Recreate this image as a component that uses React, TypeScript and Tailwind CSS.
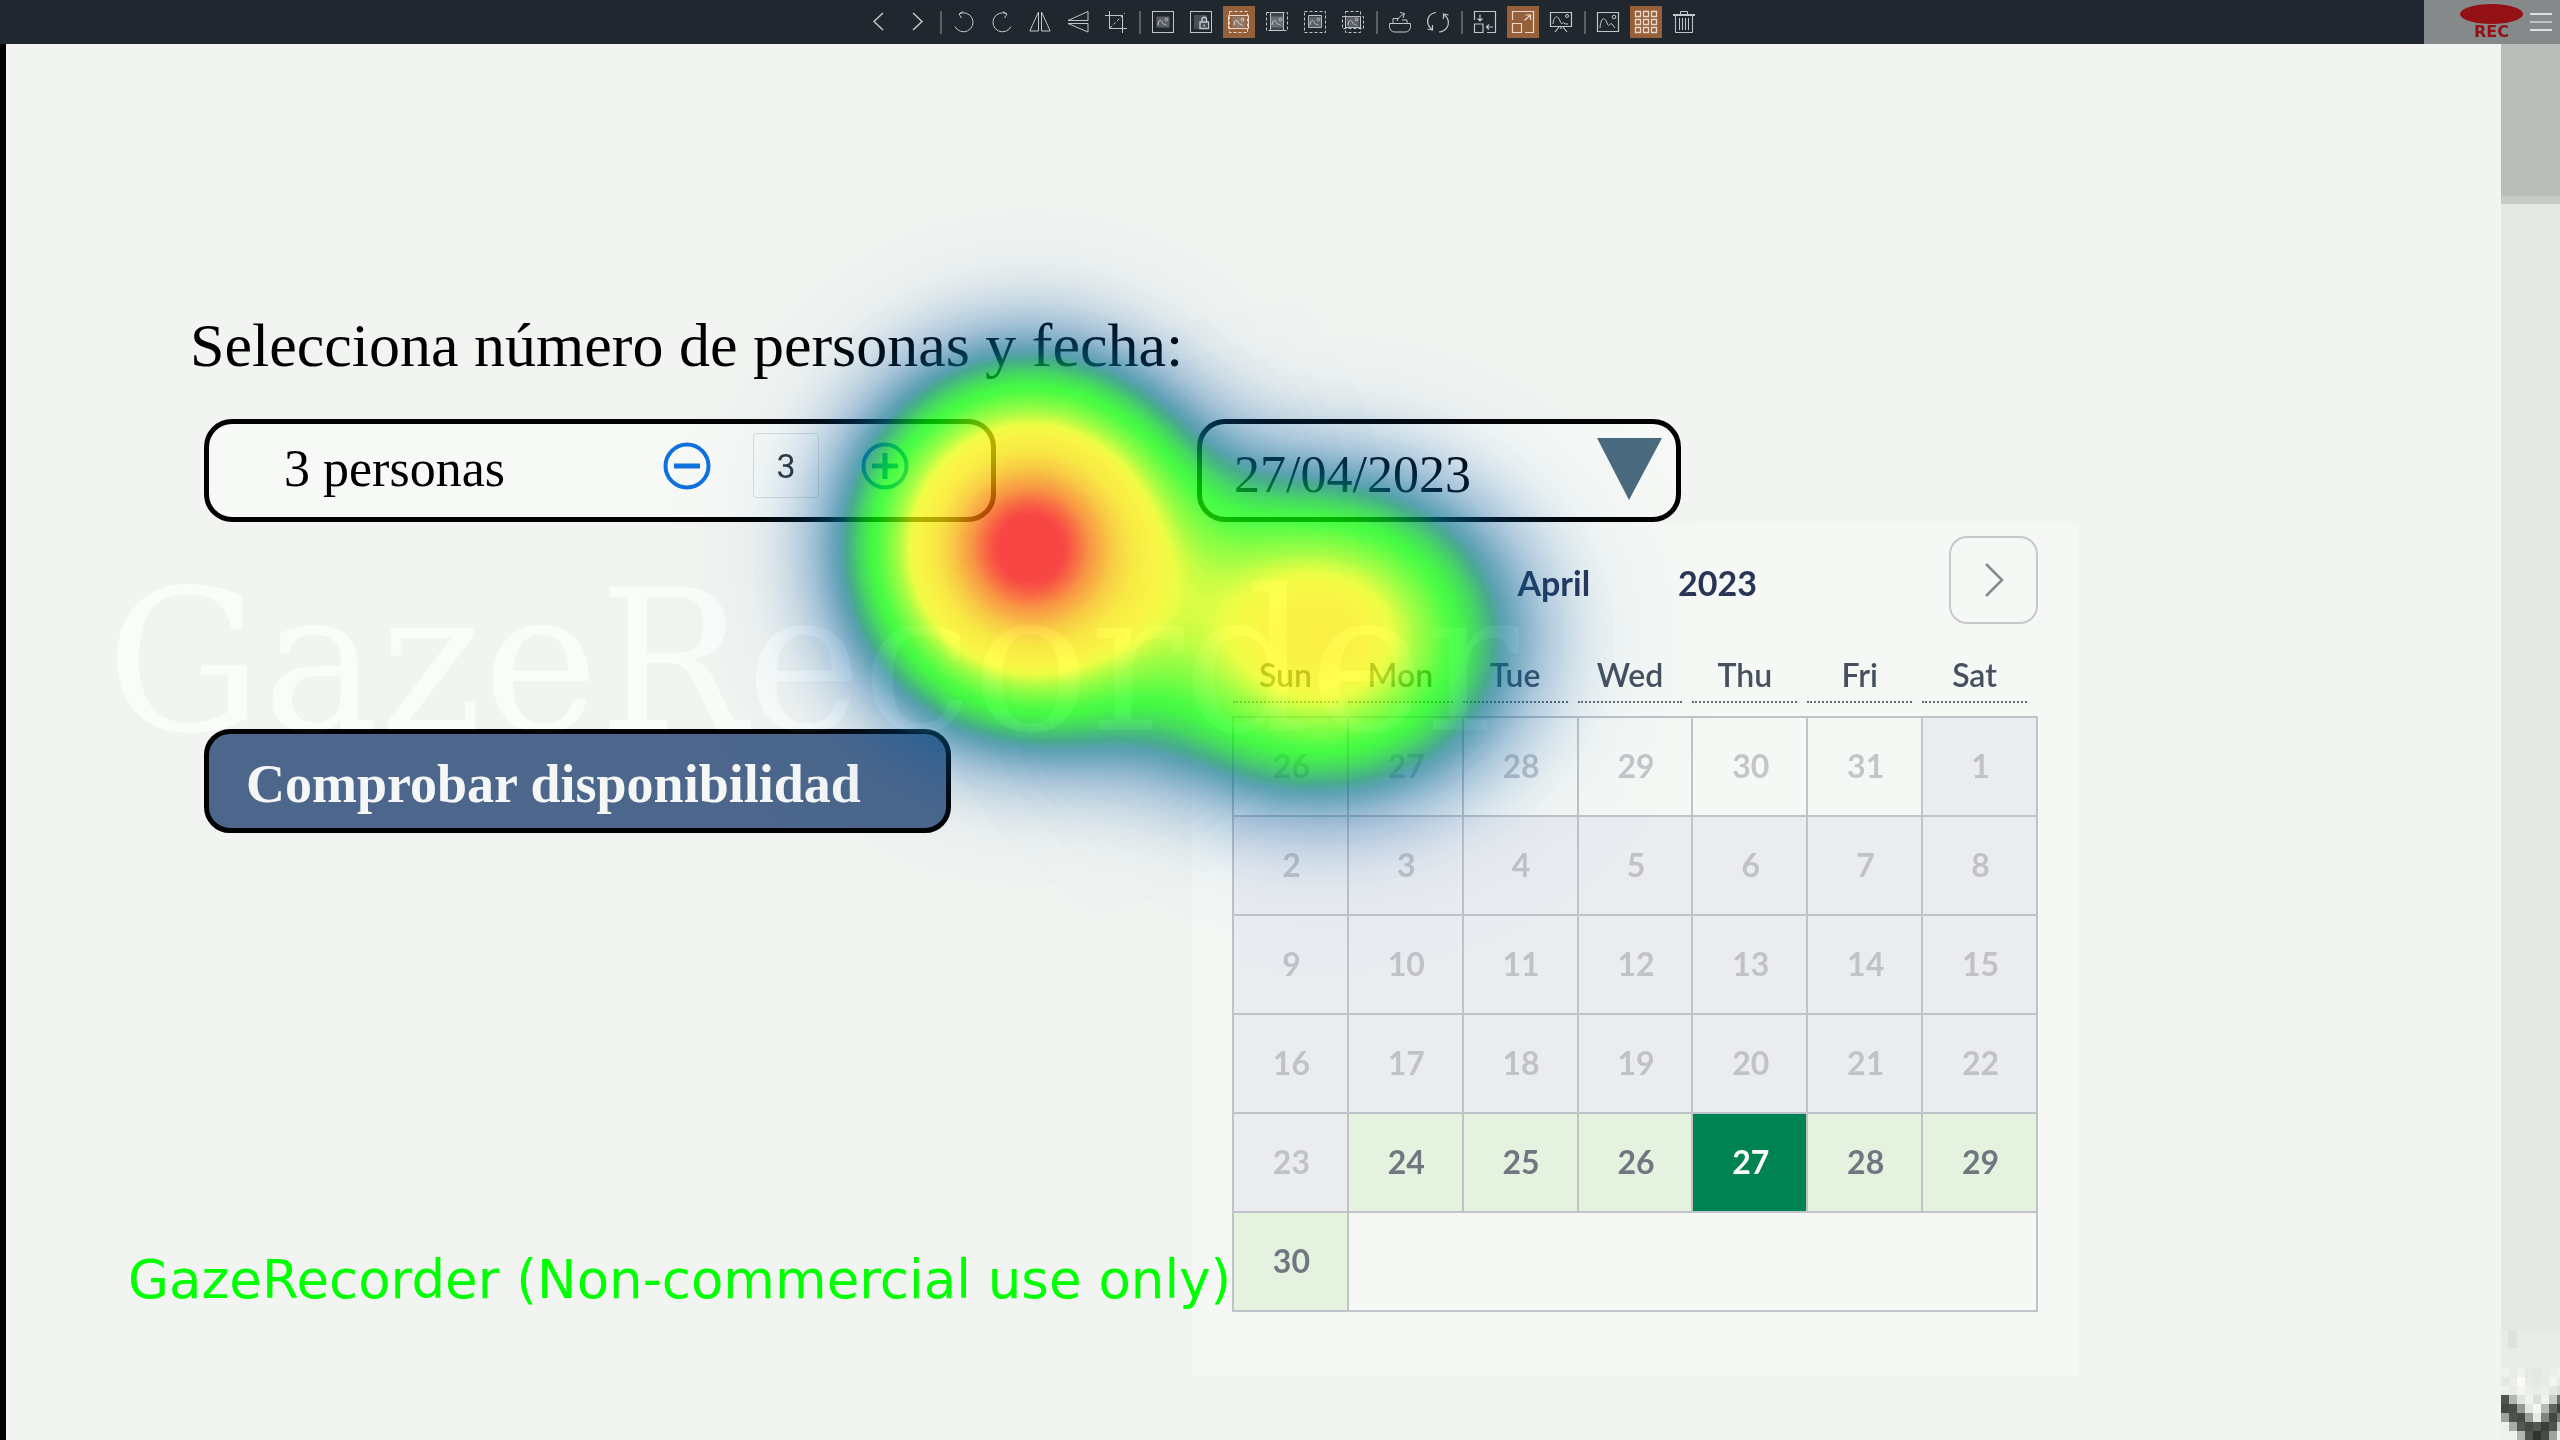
import { useState, type ReactNode } from "react";

type Tool = { label: string; icon: ReactNode; active?: boolean };

const landscape = (
  <>
    <rect x="4.5" y="5.5" width="13" height="11" fill="#8a8f93" fillOpacity="0.55" stroke="none" />
    <path d="M6 14c.5-5 3-6 4.500-2.500S13.500 12 14.500 14.500" />
    <circle cx="14.500" cy="8.500" r="1.300" />
  </>
);

const toolGroups: Tool[][] = [
  [
    { label: "Previous", icon: <path d="M15 2 6 10.500l9 8.500" strokeWidth="1.500" /> },
    { label: "Next", icon: <path d="m7 2 9 8.500L7 19" strokeWidth="1.500" /> },
  ],
  [
    { label: "Rotate left", icon: <path d="M2 15.500a9.500 9.500 0 1 0 4.500-12.800M10 .5 6 3l2.500 4" /> },
    { label: "Rotate right", icon: <path d="M20 15.500a9.500 9.500 0 1 1-4.500-12.800M12 .5l4 2.500-2.500 4" /> },
    { label: "Flip horizontal", icon: <path d="M9.500 1v19H.8zM12.500 1v19h8.700z" /> },
    { label: "Flip vertical", icon: <path d="M21 9.500H1L21 .5zM21 12.500H1l20 8.500z" /> },
    { label: "Crop", icon: <><path d="M0 4.500h17.500V22M4.500 0v17.500H22" /><path d="M5 17 20 2" strokeDasharray="3 2" /></> },
  ],
  [
    { label: "Original size", icon: <><rect x=".5" y=".5" width="21" height="21" />{landscape}</> },
    {
      label: "Lock zoom",
      icon: (
        <>
          <rect x=".5" y=".5" width="21" height="21" />
          <rect x="4" y="4" width="13" height="14" fill="#8a8f93" fillOpacity="0.4" stroke="none" />
          <path d="M10 11h8.500v6.500H10zM12 11V8.500a2.200 2.200 0 0 1 4.500 0V11M14.200 13.500v2" strokeWidth="1.400" />
        </>
      ),
    },
    { label: "Fit width", active: true, icon: <><rect x="1.500" y=".5" width="18" height="21" strokeDasharray="3 2" /><path d="M.5 4.500h20v13H.5z" />{landscape}</> },
    { label: "Fit height", icon: <><rect x=".5" y="1.500" width="21" height="18" strokeDasharray="3 2" /><path d="M4.500 1.500h13v18h-13z" fill="#8a8f93" fillOpacity=".3" />{landscape}</> },
    { label: "Fit window", icon: <><rect x=".5" y=".5" width="21" height="21" strokeDasharray="3 2" /><path d="M4.500 4.500h13v12h-13z" />{landscape}</> },
    { label: "Fill window", icon: <><path d="M3.500 .5h15v21h-15zM.5 5.500h21v12H.5z" strokeDasharray="3 2" /><path d="M3.500 5.500h15v11h-15z" />{landscape}</> },
  ],
  [
    { label: "Send to", icon: <><path d="M.5 12.500h21v3c0 3-2 5.500-5 5.500H5.500c-3 0-5-2.500-5-5.500zM4 12.500v-5h6M13 9h5v3.500" /><path d="M8 10c1-3 3-5 7-7M11 1.500l4.500 1-1.500 4.500" /></> },
    { label: "Refresh", icon: <path d="M9 1.500C2 2.500-.5 8 1 13c.6 2 1.700 3.500 3.500 5M.5 18l5 1V14M12 21c7-.5 10.500-6.500 9-12-.6-2-1.700-3.500-3.500-5M21.500 4l-5-1v5" strokeWidth="1.200" /> },
  ],
  [
    { label: "Shrink", icon: <><path d="M.5 9V.5h21v21H13M.5 13h8.500v8.500H.5zM6 3.500V10M3.500 7.500 6 10l2.500-2.500M19 16h-6.500M15 13.500 12.500 16l2.500 2.500" strokeWidth="1.200" /></> },
    { label: "Enlarge", active: true, icon: <path d="M.5 9V.5h21v21H13M.5 12.500h9v9h-9zM12.500 9.500l6-5.500M13.500 4h5v5" strokeWidth="1.200" /> },
    { label: "Slideshow", icon: <><path d="M.5 1.500h21v14H.5zM9 16l-4 5M13 16l4 5M11 15.500V18" strokeWidth="1.200" /><path d="M3 13c1-9 5-9 7-3s3-1 5 3h3" /><circle cx="17" cy="5" r="1.500" /></> },
  ],
  [
    { label: "Image", icon: <><path d="M.5 1.500h21v19H.5z" strokeWidth="1.200" /><path d="M3 17C4 5 8 6 10 12s3-1 5 1l3 4" /><circle cx="17" cy="6" r="1.800" /></> },
    { label: "Thumbnails", active: true, icon: <path d="M.5.5h5v5h-5zM8.500.5h5v5h-5zM16.500.5h5v5h-5zM.5 8.500h5v5h-5zM8.500 8.500h5v5h-5zM16.500 8.500h5v5h-5zM.5 16.500h5v5h-5zM8.500 16.500h5v5h-5zM16.500 16.500h5v5h-5z" strokeWidth="1.300" /> },
    { label: "Delete", icon: <path d="M0 3.500h22M0 4.500h22M7.500 3V.5h7V3M2.500 5v16.500h17V5M6.500 7v12M9.500 7v12M12.500 7v12M15.500 7v12" /> },
  ],
];

function Toolbar() {
  return (
    <header className="relative flex h-11 shrink-0 items-center justify-center bg-[#20272e] pl-[2px]">
      <div className="flex items-center gap-[7px]">
        {toolGroups.map((group, i) => (
          <div key={i} className="flex items-center gap-[6px]">
            {i > 0 && <span className="h-[23px] w-[2px] bg-[#5a6066]" />}
            {group.map((tool) => (
              <button
                key={tool.label}
                aria-label={tool.label}
                className={
                  tool.active
                    ? "flex size-8 items-center justify-center bg-[#95603a] text-[#ecd9cb]"
                    : "flex size-8 items-center justify-center text-[#c3c7ca]"
                }
              >
                <svg viewBox="0 0 22 22" className="size-[22px] overflow-visible" fill="none" stroke="currentColor" strokeWidth="1">
                  {tool.icon}
                </svg>
              </button>
            ))}
          </div>
        ))}
      </div>
      <div className="absolute right-0 flex h-11 w-[136px] items-center justify-end gap-[7px] bg-[#85898a] pr-2">
        <div className="flex flex-col items-center">
          <span className="h-5 w-[63px] rounded-[50%] bg-[#931014]" />
          <span className="font-['DejaVu_Sans'] text-base leading-4 font-bold text-[#931014]">REC</span>
        </div>
        <button aria-label="Menu" className="flex w-[22px] flex-col gap-[6px]">
          <span className="h-[2px] bg-[#dcdedf]" />
          <span className="h-[2px] bg-[#c0c3c4]" />
          <span className="h-[2px] bg-[#dcdedf]" />
        </button>
      </div>
    </header>
  );
}

const weekdays = ["Sun", "Mon", "Tue", "Wed", "Thu", "Fri", "Sat"];
const weeks: { day: number; kind: string }[][] = [
  [26, 27, 28, 29, 30, 31].map((day) => ({ day, kind: "outside" })).concat([{ day: 1, kind: "past" }]),
  [2, 3, 4, 5, 6, 7, 8].map((day) => ({ day, kind: "past" })),
  [9, 10, 11, 12, 13, 14, 15].map((day) => ({ day, kind: "past" })),
  [16, 17, 18, 19, 20, 21, 22].map((day) => ({ day, kind: "past" })),
  [23, 24, 25, 26, 27, 28, 29].map((day) => ({
    day,
    kind: day === 23 ? "past" : day === 27 ? "selected" : "open",
  })),
  [{ day: 30, kind: "open" }],
];
const dayStyles: Record<string, string> = {
  outside: "text-[#c3c5c8]",
  past: "bg-[#ebecf0] text-[#c0c2c8]",
  open: "bg-[#e6f2e0] text-[#6f7781]",
  selected: "bg-[#008352] text-white",
};

function Calendar() {
  return (
    <section aria-label="Calendario" className="mt-px bg-[#f6f8f5] pt-[13px] pr-[41px] pb-16 pl-10 font-['Lato',sans-serif]">
      <div className="flex items-center justify-end gap-[192px]">
        <div className="flex gap-[88px] pt-[6px] text-[34px] leading-10 font-bold text-[#2a3556]">
          <span>April</span>
          <span>2023</span>
        </div>
        <button aria-label="Next month" className="flex h-[88px] w-[89px] items-center justify-center rounded-[18px] border-2 border-[#c7c9ca]">
          <svg viewBox="0 0 20 34" className="h-[34px] w-5" fill="none" stroke="#85888d" strokeWidth="2.500">
            <path d="M2 1 18 17 2 33" />
          </svg>
        </button>
      </div>
      <table className="mt-[31px] w-full table-fixed border-collapse">
        <thead>
          <tr>
            {weekdays.map((name) => (
              <th key={name} className="p-0 pb-[13px] text-[32px] leading-10 font-semibold text-[#46505f]">
                <div className="mr-[10px] border-b-2 border-dotted border-[#666b73] pb-[6px]">{name}</div>
              </th>
            ))}
          </tr>
        </thead>
        <tbody>
          {weeks.map((week, i) => (
            <tr key={i}>
              {week.map(({ day, kind }) => (
                <td key={day} className="border-2 border-[#c0c3c8] p-0">
                  <button className={`h-[97px] w-full pb-[2px] pl-[2px] text-[32px] leading-10 font-bold ${dayStyles[kind]}`}>{day}</button>
                </td>
              ))}
              {week.length < 7 && <td colSpan={7 - week.length} className="border-2 border-[#c0c3c8]" />}
            </tr>
          ))}
        </tbody>
      </table>
    </section>
  );
}

// Heat value -> colour and opacity, as control points of a piecewise-linear ramp.
const ramp: [number, number, number, number, number][] = [
  [0, 0, 90, 190, 0],
  [0.025, 0, 90, 180, 0.04],
  [0.05, 0, 88, 170, 0.13],
  [0.1, 0, 90, 160, 0.32],
  [0.15, 0, 103, 145, 0.54],
  [0.175, 0, 110, 140, 0.63],
  [0.2, 0, 140, 100, 0.71],
  [0.25, 0, 205, 40, 0.72],
  [0.3, 0, 250, 0, 0.72],
  [0.325, 10, 255, 0, 0.72],
  [0.425, 125, 255, 0, 0.72],
  [0.5, 235, 255, 0, 0.72],
  [0.55, 250, 245, 0, 0.72],
  [0.65, 250, 228, 0, 0.72],
  [0.75, 250, 185, 0, 0.72],
  [0.85, 250, 115, 0, 0.72],
  [0.95, 250, 2, 0, 0.72],
  [1, 250, 0, 0, 0.72],
];

function channel(index: number, scale: number) {
  return Array.from({ length: 41 }, (_, step) => {
    const v = step / 40;
    const hi = Math.max(1, ramp.findIndex((p) => p[0] >= v - 1e-9));
    const a = ramp[hi - 1];
    const b = ramp[hi];
    const t = (v - a[0]) / (b[0] - a[0]);
    return ((a[index] + (b[index] - a[index]) * t) / scale).toFixed(3);
  }).join(" ");
}

function Gaussian({ id, peak }: { id: string; peak: number }) {
  return (
    <radialGradient id={id}>
      {Array.from({ length: 33 }, (_, i) => {
        const sigmas = (i / 32) * 4;
        return (
          <stop
            key={i}
            offset={i / 32}
            stopColor="#fff"
            stopOpacity={i === 32 ? 0 : peak * Math.exp((-sigmas * sigmas) / 2)}
          />
        );
      })}
    </radialGradient>
  );
}

function Heatmap() {
  return (
    <svg aria-hidden="true" viewBox="0 0 1240 860" className="pointer-events-none absolute top-[116px] left-[554px] h-[860px] w-[1240px]">
      <defs>
        <Gaussian id="gaze-a" peak={1} />
        <Gaussian id="gaze-b" peak={0.6} />
        <filter id="heat" filterUnits="userSpaceOnUse" x="0" y="0" width="1240" height="860" colorInterpolationFilters="sRGB">
          <feColorMatrix in="SourceGraphic" values="0 0 0 1 0  0 0 0 1 0  0 0 0 1 0  0 0 0 0 1" />
          <feComponentTransfer result="colour">
            <feFuncR type="table" tableValues={channel(1, 255)} />
            <feFuncG type="table" tableValues={channel(2, 255)} />
            <feFuncB type="table" tableValues={channel(3, 255)} />
          </feComponentTransfer>
          <feComponentTransfer in="SourceGraphic" result="mask">
            <feFuncA type="table" tableValues={channel(4, 1)} />
          </feComponentTransfer>
          <feComposite in="colour" in2="mask" operator="in" />
        </filter>
      </defs>
      <g filter="url(#heat)">
        <ellipse cx="470" cy="388" rx="408" ry="420" fill="url(#gaze-a)" />
        <ellipse cx="760" cy="477" rx="468" ry="396" fill="url(#gaze-b)" />
      </g>
    </svg>
  );
}

const arrowPixels = [
  ["#f0f2ef", "#e9ebe8", "#f0f2ef", "#e6e8e5", "#e4e6e3", "#e8eae7", "#eceeeb", "#f0f2ef"],
  ["#e6e8e5", "#eceeeb", "#fafbf9", "#e9ebe8", "#e6e8e5", "#e8eae7", "#f3f5f2", "#e9ebe8"],
  ["#f0f2ef", "#e9ebe8", "#f3f5f2", "#eceeeb", "#e9ebe8", "#eceeeb", "#e4e6e3", "#dcdedb"],
  ["#525452", "#b4b6b3", "#e1e3e0", "#f0f2ef", "#dcdedb", "#f0f2ef", "#c8cac7", "#6e706e"],
  ["#454745", "#4a4c4a", "#969896", "#e4e6e3", "#f5f7f4", "#b9bbb8", "#646664", "#3e403e"],
  ["#a0a2a0", "#505250", "#484a48", "#9b9d9b", "#e6e8e5", "#828482", "#454745", "#787a78"],
  ["#eef0ed", "#aaacaa", "#555755", "#464846", "#555755", "#3c3e3c", "#505250", "#c8cac7"],
  ["#f0f2ef", "#f0f2ef", "#b4b6b3", "#505250", "#303230", "#484a48", "#a0a2a0", "#f0f2ef"],
];

function ScrollTrack() {
  return (
    <aside className="flex w-[59px] shrink-0 flex-col bg-[#e6e8e5]">
      <div className="h-[152px] bg-[#bbbdba]" />
      <div className="h-2 bg-[#c8cac7]" />
      <svg aria-hidden="true" viewBox="0 0 59 110" className="mt-auto h-[110px] w-[59px]" shapeRendering="crispEdges">
        <path d="M0 0h59v38H0z" fill="#e9ebe8" />
        <path d="M7 0h9v18H7z" fill="#dfe1de" />
        {arrowPixels.flatMap((row, y) =>
          row.map((fill, x) => <rect key={`${x}-${y}`} x={x * 8} y={38 + y * 9} width="8" height="9" fill={fill} />),
        )}
      </svg>
    </aside>
  );
}

export default function App() {
  const [people, setPeople] = useState(3);
  return (
    <div className="flex min-h-screen flex-col bg-[#f2f4f1] font-['Liberation_Serif',serif] text-black">
      <Toolbar />
      <div className="flex flex-1">
        <div className="w-[6px] shrink-0 bg-black" />
        <main className="relative min-w-0 flex-1 overflow-hidden bg-[#f2f4f1] pt-[265px] pb-16">
          <h1 className="pl-[184px] text-[62px] leading-[72px]">Selecciona número de personas y fecha:</h1>
          <div className="mt-[38px] flex items-start gap-[196px] pl-[198px]">
            <div className="flex w-[792px] flex-col items-start gap-[207px]">
              <div className="flex h-[103px] w-full items-center rounded-[28px] border-5 border-black bg-[#f7f9f6] pr-[82px] pl-[75px]">
                <span className="flex-1 pb-1 text-[52px] leading-[60px]">{people} personas</span>
                <div className="flex items-center gap-[42px] pb-[10px] text-[#1070dc]">
                  <button aria-label="Menos personas" onClick={() => setPeople(people - 1)}>
                    <svg viewBox="0 0 48 48" className="size-12" fill="none" stroke="currentColor" strokeWidth="5">
                      <circle cx="24" cy="24" r="21.500" strokeWidth="4" />
                      <path d="M11 24h26" />
                    </svg>
                  </button>
                  <input
                    aria-label="Número de personas"
                    value={people}
                    readOnly
                    className="h-[65px] w-[66px] rounded-[3px] border border-[#d9dcdc] text-center font-['Roboto',sans-serif] text-[34px] leading-10 text-[#33373c]"
                  />
                  <button aria-label="Más personas" onClick={() => setPeople(people + 1)}>
                    <svg viewBox="0 0 48 48" className="size-12" fill="none" stroke="currentColor" strokeWidth="5">
                      <circle cx="24" cy="24" r="21.500" strokeWidth="4" />
                      <path d="M11 24h26M24 11v26" />
                    </svg>
                  </button>
                </div>
              </div>
              <button className="h-[104px] w-[747px] rounded-[26px] border-5 border-black bg-[#4c678b] pt-[6px] pl-[37px] text-left text-[54px] leading-[60px] font-bold text-[#f5f7f7]">
                Comprobar disponibilidad
              </button>
            </div>
            <div className="w-[887px]">
              <button className="ml-[5px] flex h-[103px] w-[484px] items-center justify-between rounded-[28px] border-5 border-black bg-[#f7f9f6] pr-[14px] pl-[32px]">
                <span className="pt-2 text-[52px] leading-[60px]">27/04/2023</span>
                <svg viewBox="0 0 65 62" className="mb-1 h-[62px] w-[65px]">
                  <path d="M0 0h65L32 62z" fill="#4a6b7e" />
                </svg>
              </button>
              <Calendar />
            </div>
          </div>
          <Heatmap />
          <div aria-hidden="true" className="pointer-events-none absolute top-[504px] left-[100px] font-['DejaVu_Serif'] text-[196px] leading-[228px] whitespace-nowrap text-[#080808] mix-blend-plus-lighter">
            GazeRecorder
          </div>
          <p className="absolute top-[1204px] left-[122px] font-['DejaVu_Sans'] text-[53px] leading-[64px] whitespace-nowrap text-[#00ff00]">
            GazeRecorder (Non-commercial use only)
          </p>
        </main>
        <ScrollTrack />
      </div>
    </div>
  );
}
